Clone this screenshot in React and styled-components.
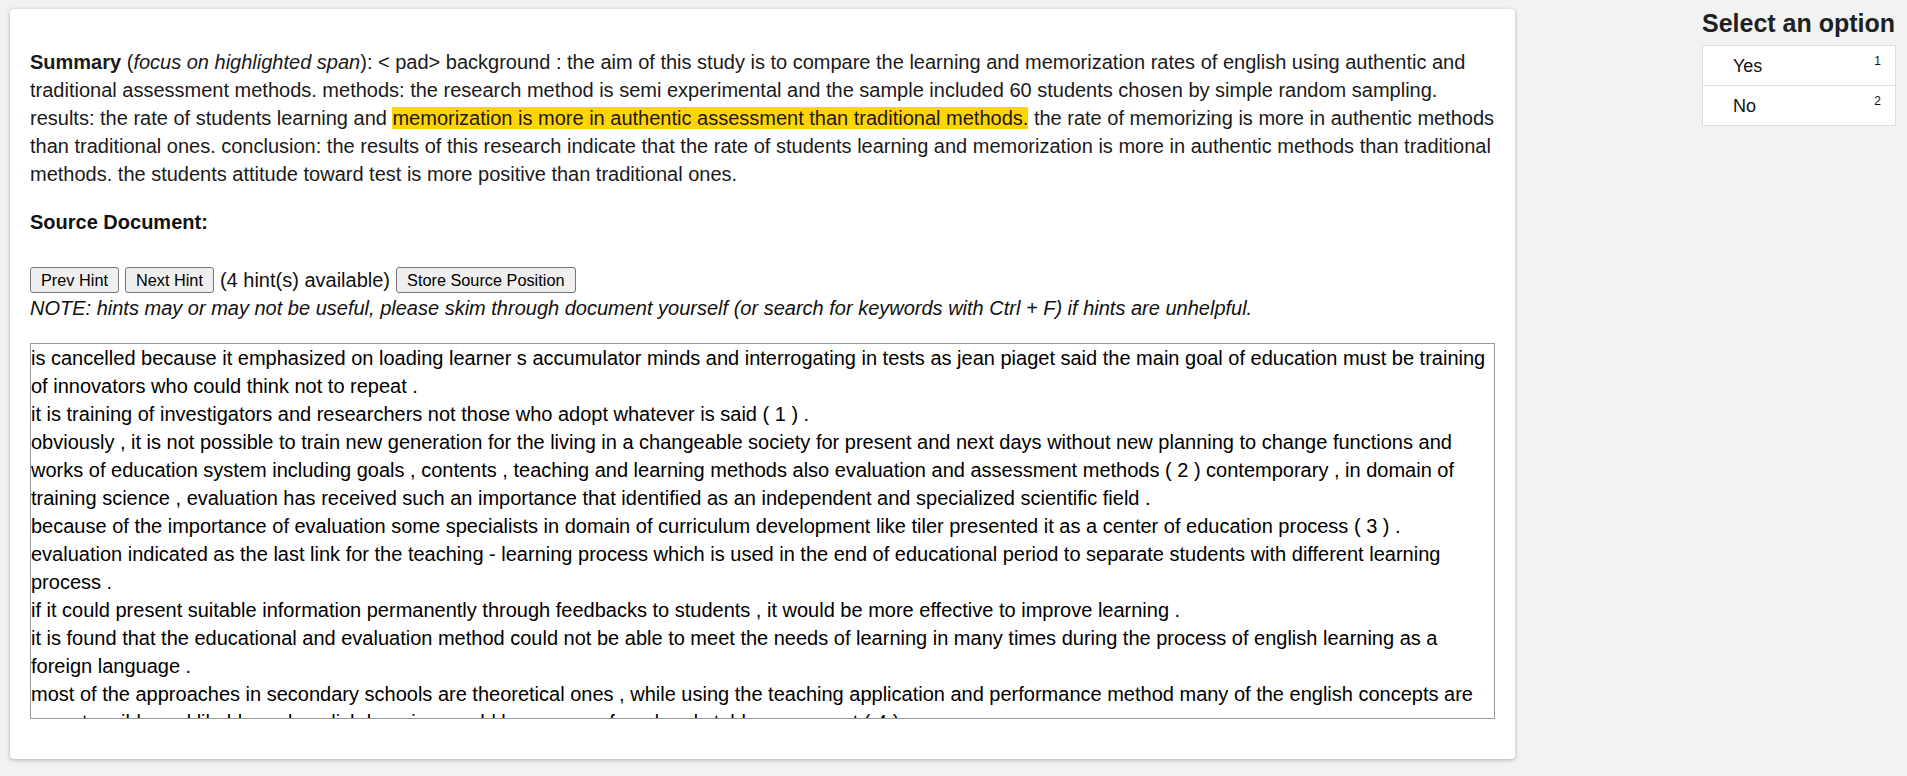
import React from 'react'
import styled, { createGlobalStyle } from 'styled-components'

const GlobalStyle = createGlobalStyle`
  html, body {
    margin: 0;
    padding: 0;
    background: #f1f2f1;
  }
  body {
    font-family: 'Liberation Sans', Arial, Helvetica, sans-serif;
    color: #111;
  }
`

const Page = styled.div`
  display: flex;
  align-items: flex-start;
  justify-content: space-between;
  padding: 9px 11px 0 10px;
  min-height: 776px;
  box-sizing: border-box;
`

const Card = styled.div`
  width: 1505px;
  box-sizing: border-box;
  background: #fff;
  border-radius: 4px;
  box-shadow: 0 1px 4px rgba(0, 0, 0, 0.28);
  padding: 39px 20px 40px;
  font-size: 20px;
  line-height: 28px;
`

const Summary = styled.p`
  margin: 0 0 20px;
  color: #1a1a1a;
`

const Highlight = styled.span`
  background: #ffd500;
`

const SectionTitle = styled.div`
  font-weight: bold;
  margin-bottom: 30px;
`

const HintRow = styled.div`
  display: flex;
  align-items: center;
  gap: 6px;
  height: 28px;
  white-space: nowrap;
`

const HintButton = styled.button`
  font-family: 'Liberation Sans', Arial, sans-serif;
  font-size: 16.3px;
  height: 26px;
  padding: 0 10px;
  background: #efefef;
  border: 1px solid #767676;
  border-radius: 3px;
  color: #000;
`

const Note = styled.div`
  font-style: italic;
  margin-bottom: 21px;
`

const DocBox = styled.div`
  height: 374px;
  border: 1px solid #999;
  overflow: hidden;
  color: #000;
`

const DocLine = styled.div``

const Side = styled.div`
  width: 194px;
`

const SideTitle = styled.h2`
  margin: 0 0 8px;
  font-size: 25px;
  line-height: 28px;
  font-weight: bold;
  color: #1d1f23;
  white-space: nowrap;
`

const OptionList = styled.div`
  background: #fff;
  border: 1px solid #dedede;
`

const Option = styled.div`
  display: flex;
  justify-content: space-between;
  height: 39px;
  padding: 0 14px 0 30px;
  border-top: ${(p) => (p.first ? 'none' : '1px solid #dedede')};
  font-size: 18px;
  color: #111;
`

const OptionLabel = styled.span`
  align-self: center;
  padding-top: 1px;
`

const OptionKey = styled.span`
  font-size: 12px;
  padding-top: 8px;
`

const docLines = [
  'is cancelled because it emphasized on loading learner s accumulator minds and interrogating in tests as jean piaget said the main goal of education must be training of innovators who could think not to repeat .',
  'it is training of investigators and researchers not those who adopt whatever is said ( 1 ) .',
  'obviously , it is not possible to train new generation for the living in a changeable society for present and next days without new planning to change functions and works of education system including goals , contents , teaching and learning methods also evaluation and assessment methods ( 2 ) contemporary , in domain of training science , evaluation has received such an importance that identified as an independent and specialized scientific field .',
  'because of the importance of evaluation some specialists in domain of curriculum development like tiler presented it as a center of education process ( 3 ) .',
  'evaluation indicated as the last link for the teaching - learning process which is used in the end of educational period to separate students with different learning process .',
  'if it could present suitable information permanently through feedbacks to students , it would be more effective to improve learning .',
  'it is found that the educational and evaluation method could not be able to meet the needs of learning in many times during the process of english learning as a foreign language .',
  'most of the approaches in secondary schools are theoretical ones , while using the teaching application and performance method many of the english concepts are more tangible and likable and english learning would be more profound and stable permanent ( 4 ) .',
  'authentic assessment is a form of assessment in which students are asked to perform real - world tasks that demonstrate meaningful application of essential knowledge and skills .',
]

const options = [
  { label: 'Yes', key: 1 },
  { label: 'No', key: 2 },
]

export default function App() {
  return (
    <>
      <GlobalStyle />
      <Page>
        <Card>
          <Summary>
            <b>Summary</b> (<i>focus on highlighted span</i>): &lt; pad&gt; background : the aim of
            this study is to compare the learning and memorization rates of english using authentic
            and traditional assessment methods. methods: the research method is semi experimental
            and the sample included 60 students chosen by simple random sampling. results: the rate
            of students learning and{' '}
            <Highlight>memorization is more in authentic assessment than traditional methods.</Highlight>{' '}
            the rate of memorizing is more in authentic methods than traditional ones. conclusion:
            the results of this research indicate that the rate of students learning and
            memorization is more in authentic methods than traditional methods. the students
            attitude toward test is more positive than traditional ones.
          </Summary>
          <SectionTitle>Source Document:</SectionTitle>
          <HintRow>
            <HintButton>Prev Hint</HintButton>
            <HintButton>Next Hint</HintButton>
            <span>(4 hint(s) available)</span>
            <HintButton>Store Source Position</HintButton>
          </HintRow>
          <Note>
            NOTE: hints may or may not be useful, please skim through document yourself (or search
            for keywords with Ctrl + F) if hints are unhelpful.
          </Note>
          <DocBox>
            {docLines.map((line, i) => (
              <DocLine key={i}>{line}</DocLine>
            ))}
          </DocBox>
        </Card>
        <Side>
          <SideTitle>Select an option</SideTitle>
          <OptionList>
            {options.map((o, i) => (
              <Option key={o.key} first={i === 0}>
                <OptionLabel>{o.label}</OptionLabel>
                <OptionKey>{o.key}</OptionKey>
              </Option>
            ))}
          </OptionList>
        </Side>
      </Page>
    </>
  )
}
